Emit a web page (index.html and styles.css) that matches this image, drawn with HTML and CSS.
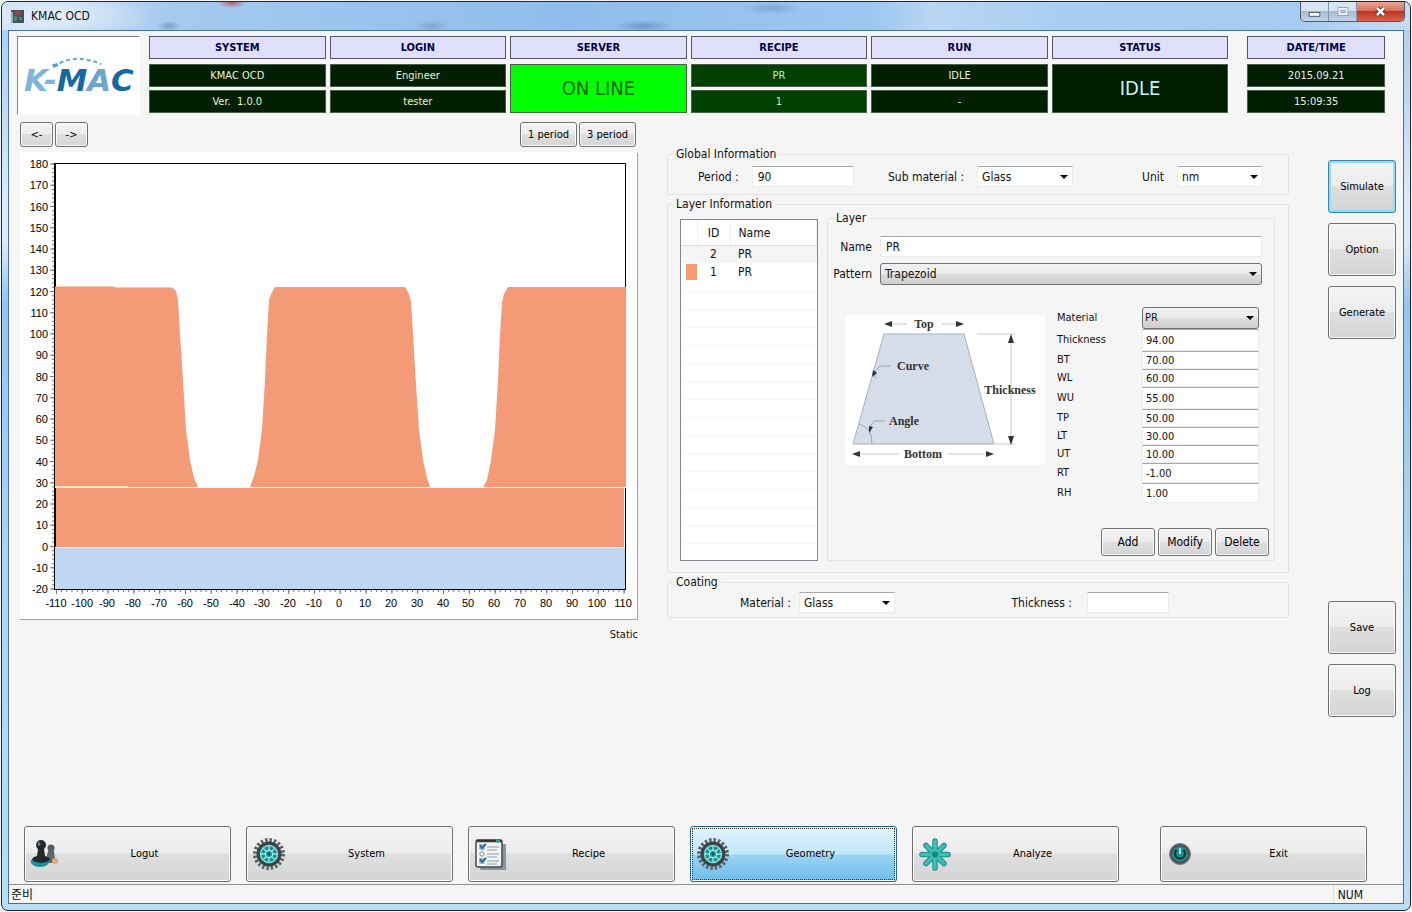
FILE: index.html
```html
<!DOCTYPE html>
<html lang="en">
<head>
<meta charset="utf-8">
<title>KMAC OCD</title>
<link rel="stylesheet" href="styles.css">
</head>
<body>
<svg class="defs" aria-hidden="true">
  <defs>
    <symbol id="gear" viewBox="0 0 34 34">
      <circle cx="17" cy="17" r="14" fill="none" stroke="#5d6468" stroke-width="4" stroke-dasharray="2.500 1.900"/>
      <circle cx="17" cy="17" r="11" fill="#1f5f63" stroke="#3a4347" stroke-width="3"/>
      <circle cx="17" cy="17" r="8.500" fill="#1c8d8f" stroke="#7fdeda" stroke-width="1.500"/>
      <path d="M17 9v16M9 17h16M11.400 11.400l11.200 11.200M22.600 11.400L11.400 22.600" stroke="#8ee6e2" stroke-width="1.400"/>
      <circle cx="17" cy="17" r="3.600" fill="#1c8d8f" stroke="#a8f0ec" stroke-width="1.300"/>
      <circle cx="17" cy="17" r="1.200" fill="#0b4c50"/>
    </symbol>
  </defs>
</svg>
<div class="window">
  <div class="titlebar">
    <svg class="app-icon" viewBox="0 0 13 13" aria-hidden="true"><rect width="13" height="13" fill="#46525a"/><path d="M0 2h2v11H0z" fill="#9fb0b8"/><path d="M4 1h6v4H4z" fill="#8a4a52"/><path d="M3 6h3v5H3zM8 7h3v3H8z" fill="#3d8d80"/></svg>
    <span class="title">KMAC OCD</span>
    <div class="caption">
      <button class="cap" aria-label="Minimize"><svg viewBox="0 0 28 19"><rect x="8.500" y="10.500" width="11" height="4" fill="#fff" stroke="#4c5865"/></svg></button>
      <button class="cap" aria-label="Maximize"><svg viewBox="0 0 26 19"><rect x="8.500" y="5.500" width="10" height="8" fill="#e8f0f8" stroke="#94a5b6"/><rect x="11.500" y="8.500" width="4" height="2" fill="#b9cad9" stroke="#94a5b6"/></svg></button>
      <button class="cap close" aria-label="Close"><svg viewBox="0 0 47 19"><path d="M20 6l7 7M27 6l-7 7" stroke="#5a2a2a" stroke-width="4.500"/><path d="M20 6l7 7M27 6l-7 7" stroke="#fff" stroke-width="2.500"/></svg></button>
    </div>
  </div>

  <main class="client">
    <header class="header">
      <div class="logo">
        <svg viewBox="0 0 122 77" role="img" aria-label="K-MAC">
          <path d="M35 29L40 27.500" stroke="#4f9ccd" stroke-width="3.500"/>
          <path d="M42 26q18-9 42 1" fill="none" stroke="#5fa6d4" stroke-width="2" stroke-dasharray="4 3"/>
          <text x="6" y="54" class="logo-text"><tspan fill="#7db5dc">K-</tspan><tspan fill="#14699f">M</tspan><tspan fill="#6aa6cf">A</tspan><tspan fill="#14699f">C</tspan></text>
        </svg>
      </div>
      <section class="stat"><h2>SYSTEM</h2><p class="cell">KMAC OCD</p><p class="cell">Ver.&nbsp; 1.0.0</p></section>
      <section class="stat"><h2>LOGIN</h2><p class="cell">Engineer</p><p class="cell">tester</p></section>
      <section class="stat"><h2>SERVER</h2><p class="cell big online">ON LINE</p></section>
      <section class="stat green"><h2>RECIPE</h2><p class="cell">PR</p><p class="cell">1</p></section>
      <section class="stat"><h2>RUN</h2><p class="cell">IDLE</p><p class="cell">-</p></section>
      <section class="stat"><h2>STATUS</h2><p class="cell big">IDLE</p></section>
      <section class="stat date"><h2>DATE/TIME</h2><p class="cell">2015.09.21</p><p class="cell">15:09:35</p></section>
    </header>

    <div class="workspace">
      <section class="plot-column">
        <div class="toolbar">
          <button class="btn arrow">&lt;-</button>
          <button class="btn arrow">-&gt;</button>
          <button class="btn period push">1 period</button>
          <button class="btn period">3 period</button>
        </div>
        <svg class="chart" viewBox="20 152 618 468" role="img" aria-label="Layer profile">
          <rect x="20" y="152" width="618" height="468" fill="#fff"/>
          <path d="M637.500 153V619.500H20" fill="none" stroke="#a3a3a3"/>
          <path d="M55 163.500H625.500V589.500H55" fill="none" stroke="#000"/>
          <path d="M55 163V590" stroke="#000" stroke-width="2"/>
          <rect x="55" y="547" width="570" height="42" fill="#bfd7f3"/>
          <rect x="56" y="488" width="568" height="59" fill="#f49a76"/>
          <path d="M55 286.500H114L116 287.500H172L176 291L178 300L180 335L183 380L186 430L190 460L194 478L198 487H250L254 476L258 460L262 430L265 380L267 335L269 300L271 294L275 287H405L409 294L411 302L413 335L416 385L419 430L423 460L427 478L430 487H483L487 480L491 460L495 430L498 380L500 335L502 302L504 294L508 287H626V487H55Z" fill="#f49a76"/>
          <path d="M55 487.500H626M55 547.500H625" stroke="#fff3ec"/>
          <path d="M55 486.500H128" stroke="#fbe3bd"/>
          <path d="M53 163.500V590" stroke="#777" stroke-width="2" stroke-dasharray="1 3.250"/>
          <path d="M52 163.500V590" stroke="#777" stroke-width="4" stroke-dasharray="1 20.250"/>
          <path d="M56 591H625" stroke="#777" stroke-width="2" stroke-dasharray="1 4.160"/>
          <path d="M56 592H625" stroke="#777" stroke-width="4" stroke-dasharray="1 24.800"/>
          <g text-anchor="end">
            <text x="48" y="168">180</text><text x="48" y="189">170</text><text x="48" y="211">160</text><text x="48" y="232">150</text><text x="48" y="253">140</text><text x="48" y="274">130</text><text x="48" y="296">120</text><text x="48" y="317">110</text><text x="48" y="338">100</text><text x="48" y="359">90</text><text x="48" y="381">80</text><text x="48" y="402">70</text><text x="48" y="423">60</text><text x="48" y="444">50</text><text x="48" y="466">40</text><text x="48" y="487">30</text><text x="48" y="508">20</text><text x="48" y="529">10</text><text x="48" y="551">0</text><text x="48" y="572">-10</text><text x="48" y="593">-20</text>
          </g>
          <g text-anchor="middle">
            <text x="56" y="607">-110</text><text x="82" y="607">-100</text><text x="107" y="607">-90</text><text x="133" y="607">-80</text><text x="159" y="607">-70</text><text x="185" y="607">-60</text><text x="211" y="607">-50</text><text x="237" y="607">-40</text><text x="262" y="607">-30</text><text x="288" y="607">-20</text><text x="314" y="607">-10</text><text x="339" y="607">0</text><text x="365" y="607">10</text><text x="391" y="607">20</text><text x="417" y="607">30</text><text x="443" y="607">40</text><text x="468" y="607">50</text><text x="494" y="607">60</text><text x="520" y="607">70</text><text x="546" y="607">80</text><text x="572" y="607">90</text><text x="597" y="607">100</text><text x="623" y="607">110</text>
          </g>
        </svg>
        <p class="static">Static</p>
      </section>

      <form class="forms">
        <fieldset>
          <legend>Global Information</legend>
          <div class="global">
            <div class="pair"><label for="period">Period :</label><input id="period" class="w-period" type="text" value="90"></div>
            <div class="pair"><label for="sub">Sub material :</label><select id="sub" class="w-sub"><option>Glass</option></select></div>
            <div class="pair"><label for="unit">Unit</label><select id="unit" class="w-unit"><option>nm</option></select></div>
          </div>
        </fieldset>

        <fieldset class="spaced">
          <legend>Layer Information</legend>
          <div class="layers">
            <div class="list">
              <table>
                <thead><tr><th class="c-color"></th><th class="c-id">ID</th><th>Name</th></tr></thead>
                <tbody>
                  <tr class="alt"><td></td><td class="c-id">2</td><td>PR</td></tr>
                  <tr><td><span class="swatch"></span></td><td class="c-id">1</td><td>PR</td></tr>
                </tbody>
              </table>
            </div>
            <fieldset>
              <legend>Layer</legend>
              <div class="layer">
                <div class="wide-row"><label for="name">Name</label><input id="name" type="text" value="PR"></div>
                <div class="wide-row"><label for="pattern">Pattern</label><select id="pattern" class="raised"><option>Trapezoid</option></select></div>
                <div class="details">
                  <svg class="shape" viewBox="0 0 200 150" role="img" aria-label="Trapezoid dimensions">
                    <rect width="200" height="150" rx="2" fill="#fff"/>
                    <path d="M39 19H119L149 129H8Z" fill="#d5dde8" stroke="#a9b1bd"/>
                    <path d="M47 9H62M96 9H112M15 139H54M102 139H142M166 26V122M132 19H170M149 129H170" stroke="#c9c9c9" fill="none"/>
                    <path d="M39 9l8-3v6zM119 9l-8-3v6zM7 139l8-3v6zM149 139l-8-3v6zM166 19l-3 9h6zM166 130l-3-9h6z" fill="#333"/>
                    <path d="M46 51H36Q29 54 30 63M40 106H30Q25 108 25 117M14 109Q27 112 27 129" fill="none" stroke="#98a5ba"/>
                    <path d="M27 62l1-7l4 3zM24 118l0-7l4 1z" fill="#22344c"/>
                    <g class="shape-text"><text x="79" y="13">Top</text><text x="68" y="55">Curve</text><text x="59" y="110">Angle</text><text x="165" y="79">Thickness</text><text x="78" y="143">Bottom</text></g>
                  </svg>
                  <div class="params">
                    <label for="mat">Material</label><select id="mat" class="raised"><option>PR</option></select>
                    <label for="th">Thickness</label><input id="th" type="text" value="94.00">
                    <label for="bt">BT</label><input id="bt" type="text" value="70.00">
                    <label for="wl">WL</label><input id="wl" type="text" value="60.00">
                    <label for="wu">WU</label><input id="wu" type="text" value="55.00">
                    <label for="tp">TP</label><input id="tp" type="text" value="50.00">
                    <label for="lt">LT</label><input id="lt" type="text" value="30.00">
                    <label for="ut">UT</label><input id="ut" type="text" value="10.00">
                    <label for="rt">RT</label><input id="rt" type="text" value="-1.00">
                    <label for="rh">RH</label><input id="rh" type="text" value="1.00">
                  </div>
                </div>
                <div class="actions">
                  <button type="button" class="btn">Add</button>
                  <button type="button" class="btn">Modify</button>
                  <button type="button" class="btn">Delete</button>
                </div>
              </div>
            </fieldset>
          </div>
        </fieldset>

        <fieldset class="spaced">
          <legend>Coating</legend>
          <div class="coating">
            <div class="pair"><label for="cmat">Material :</label><select id="cmat" class="w-sub"><option>Glass</option></select></div>
            <div class="pair thick"><label for="cth">Thickness :</label><input id="cth" class="w-thick" type="text"></div>
          </div>
        </fieldset>
      </form>

      <aside class="side">
        <button class="btn default">Simulate</button>
        <button class="btn">Option</button>
        <button class="btn">Generate</button>
        <button class="btn save">Save</button>
        <button class="btn">Log</button>
      </aside>
    </div>

    <nav class="nav">
      <button class="btn">
        <svg viewBox="4 1 34 34" aria-hidden="true"><circle cx="25" cy="12" r="3.500" fill="#555b60"/><path d="M22 15h6l1 8q3 1 3 4H19z" fill="#60666a"/><ellipse cx="29" cy="25" rx="3" ry="3" fill="#e0a878"/><path d="M5 24q10-3 18 0v3q-3 4-9 4t-9-4z" fill="#12949a"/><circle cx="15" cy="9" r="5" fill="#23282b"/><path d="M12 13h6l1 7q5 1 5 4q-4 3-9 3t-9-3q0-3 5-4z" fill="#23282b"/><ellipse cx="13" cy="8" rx="1.500" ry="2" fill="#737b80"/></svg>
        <span>Logut</span></button>
      <button class="btn"><svg aria-hidden="true"><use href="#gear"/></svg><span>System</span></button>
      <button class="btn">
        <svg viewBox="0 0 34 34" aria-hidden="true"><rect x="6" y="7" width="26" height="26" rx="1" fill="#8f9498"/><rect x="2" y="3" width="26" height="27" rx="2" fill="#f2f5f6" stroke="#41474b" stroke-width="1.500"/><path d="M3 4h25" stroke="#333" stroke-width="2.500"/><path d="M22 4h4" stroke="#1fa58a" stroke-width="3"/><g fill="#fff" stroke="#6c8ea4"><rect x="6" y="8" width="4" height="4"/><circle cx="8" cy="17" r="2.200"/><rect x="6" y="22" width="4" height="4"/></g><path d="M6 8l2 3l4-4M6 22l2 3l4-4" fill="none" stroke="#246b9c" stroke-width="2"/><path d="M13 10h12M13 13h10M13 17h12M13 20h10M13 24h12M13 27h10" stroke="#8e989e"/></svg>
        <span>Recipe</span></button>
      <button class="btn current"><svg aria-hidden="true"><use href="#gear"/></svg><span>Geometry</span></button>
      <button class="btn">
        <svg viewBox="0 0 34 34" aria-hidden="true"><path d="M17 4V31M4 17.500H30M8 8.500L26 26.500M26 8.500L8 26.500" stroke="#188e8b" stroke-width="5.500" stroke-linecap="round"/><path d="M17 4V31M4 17.500H30M8 8.500L26 26.500M26 8.500L8 26.500" stroke="#3fbfb4" stroke-width="3.500" stroke-linecap="round"/><circle cx="17" cy="17.500" r="3" fill="#168582"/></svg>
        <span>Analyze</span></button>
      <button class="btn exit">
        <svg viewBox="0 0 34 34" aria-hidden="true"><circle cx="17" cy="17" r="10.500" fill="#4e5559" stroke="#777d80"/><circle cx="17" cy="17" r="7.500" fill="#1d8f8d"/><path d="M13.500 13a5 5 0 1 0 7 0" fill="none" stroke="#072f33" stroke-width="2"/><path d="M17 11v6" stroke="#8bf0e4" stroke-width="2"/></svg>
        <span>Exit</span></button>
    </nav>
    <footer class="statusbar"><span>준비</span><span class="num">NUM</span></footer>
  </main>
</div>
</body>
</html>
```
FILE: styles.css
```css
* { box-sizing: border-box; }
body {
  margin: 0;
  font: 11px/14px "DejaVu Sans Condensed", "Noto Sans", "Noto Sans CJK KR", sans-serif;
  color: #111;
  background: #f4f4f4;
}
button, input, select { font: inherit; color: inherit; }
h2, p { margin: 0; }
.defs { position: absolute; width: 0; height: 0; }

.window {
  display: flex;
  flex-direction: column;
  min-height: calc(100vh - 2px);
  margin: 1px;
  padding: 0 6px 6px;
  border: 1px solid #1c2b33;
  border-radius: 7px;
  background: linear-gradient(180deg, #a9cdf2 0, #b9d8f6 90px, #dcebf9 200px, #dcebf9 240px, #93c5f0 300px, #a8d4f5 60%, #b9def5 100%);
}
.titlebar {
  display: flex;
  align-items: center;
  gap: 7px;
  height: 28px;
  margin: 0 -6px;
  padding-left: 9px;
  border-radius: 6px 6px 0 0;
  background:
    radial-gradient(12px 5px at 167px 24px, #7f9cba, transparent),
    radial-gradient(14px 5px at 230px 1px, #b4616d, transparent),
    radial-gradient(18px 6px at 430px 24px, #84a6c9, transparent),
    radial-gradient(30px 6px at 642px 24px, #6e99c6, transparent),
    radial-gradient(30px 6px at 770px 6px, #7da6d2, transparent),
    radial-gradient(100px 26px at 55px 14px, #e4effa, transparent),
    linear-gradient(90deg, #cfe2f5, #a5caef 12%, #8fbdeb 40%, #9ec7f0 62%, #b9d6f4 66%, #a9cef2 75%, #a6ccf1 92%, #c5dcf3);
}
.app-icon { width: 13px; height: 13px; }
.title { flex: 1; font-size: 12px; }
.caption {
  display: flex;
  align-self: flex-start;
  margin-right: 5px;
  border: 1px solid #4b5a69;
  border-top: 0;
  border-radius: 0 0 5px 5px;
  overflow: hidden;
}
.cap {
  width: 28px;
  height: 19px;
  padding: 0;
  border: 0;
  border-right: 1px solid #8296aa;
  background: linear-gradient(#d6e4f1 45%, #a6bace 50%, #c3d5e6);
}
.cap svg { display: block; width: 100%; height: 19px; }
.cap.close { width: 47px; border: 0; background: linear-gradient(#eaa697, #d9705c 45%, #bf3522 50%, #d9604a); }

.client {
  flex: 1;
  display: flex;
  flex-direction: column;
  border: 1px solid #4a7299;
  background: #f5f5f5;
}

.header {
  display: grid;
  grid-template-columns: 124px repeat(6, 177fr) 153fr;
  column-gap: 4px;
  padding: 5px 22px 7px 8px;
}
.logo {
  height: 79px;
  margin-right: 1px;
  border: 1px solid #fff;
  border-top-color: #777;
  border-left-color: #888;
  background: #fff;
}
.logo svg { display: block; width: 100%; height: 77px; }
.logo-text { font: italic bold 31px "DejaVu Sans", sans-serif; }
.stat { display: flex; flex-direction: column; gap: 3px; margin-left: 4px; margin-right: -4px; text-align: center; }
.stat h2 {
  margin-bottom: 2px;
  font-size: 11px;
  line-height: 21px;
  border: 1px solid #55556a;
  background: #e0e0fd;
  color: #00004e;
}
.cell {
  line-height: 21px;
  border: 1px solid #48604a;
  background: #001e00;
  color: #e9f8c8;
}
.green .cell { background: #004000; color: #b4f5b4; }
.cell.big { font-size: 20px; line-height: 47px; color: #c4f6ee; }
.cell.online { background: #0f0; color: #006a00; }
.date { margin-left: 19px; }
.date .cell { color: #e6f0e6; }

.btn {
  padding: 0;
  border: 1px solid #707070;
  border-radius: 3px;
  box-shadow: inset 0 0 0 1px #fafafa;
  background: linear-gradient(#f4f4f4, #ececec 48%, #dfdfdf 50%, #d4d4d4);
  color: #000;
}

.workspace {
  display: grid;
  grid-template-columns: 618fr 690fr 68px;
  padding: 0 7px 0 11px;
}
.plot-column { min-width: 0; }
.toolbar { display: flex; gap: 2px; margin-bottom: 5px; padding-right: 2px; }
.toolbar .btn { height: 25px; }
.arrow { width: 33px; }
.period { width: 57px; }
.push { margin-left: auto; }
.chart { display: block; width: 100%; }
.chart text { font: 11px "Liberation Sans", sans-serif; }
.static { margin-top: 8px; text-align: right; }

.forms { margin: 25px 39px 0 29px; font-size: 12px; }
fieldset {
  min-width: 0;
  margin: 0;
  padding: 0;
  border: 1px solid #e3e3e3;
  border-radius: 2px;
}
.spaced { margin-top: 2px; }
legend { margin-left: 5px; padding: 0 3px; line-height: 14px; }
input, select {
  width: 100%;
  min-width: 0;
  height: 21px;
  margin: 0;
  padding: 0 5px;
  border: 1px solid #ececec;
  border-top-color: #a8a8a8;
  border-radius: 0;
  background-color: #fff;
}
select {
  appearance: none;
  padding: 0 4px;
  background-image: url("data:image/svg+xml,%3Csvg xmlns='http://www.w3.org/2000/svg' width='8' height='4'%3E%3Cpath d='M0 0h8L4 4z'/%3E%3C/svg%3E");
  background-repeat: no-repeat;
  background-position: right 4px center;
}
select.raised {
  height: 22px;
  border: 1px solid #707070;
  border-radius: 3px;
  background-image: url("data:image/svg+xml,%3Csvg xmlns='http://www.w3.org/2000/svg' width='8' height='4'%3E%3Cpath d='M0 0h8L4 4z'/%3E%3C/svg%3E"), linear-gradient(#f2f2f2, #ebebeb 48%, #dddddd 50%, #cfcfcf);
  background-position: right 4px center, 0 0;
}
.pair { display: flex; align-items: center; gap: 13px; white-space: nowrap; }
.w-period { width: 102px; }
.w-sub { width: 96px; }
.w-unit { width: 86px; }
.w-thick { width: 82px; }

.global {
  display: grid;
  grid-template-columns: 190fr 254fr 146fr;
  padding: 5px 0 7px 30px;
}
.layers {
  display: grid;
  grid-template-columns: 138fr 448fr;
  column-gap: 9px;
  padding: 0 13px 11px 12px;
}
.list {
  margin-top: 8px;
  border: 1px solid #828790;
  background: repeating-linear-gradient(#fff 0 17px, #f8f8f8 17px 18px);
}
.list table { width: 100%; border-collapse: collapse; table-layout: fixed; }
.list th { height: 25px; padding: 2px 0 0 8px; border-right: 1px solid #f0f0f0; border-bottom: 1px solid #dcdcdc; background: #fff; font-weight: normal; text-align: left; }
.list td { height: 18px; padding: 0 0 0 8px; background: #fff; }
.list .alt td { background: #f5f5f5; }
.list th.c-color { width: 16px; }
.list .c-id { width: 33px; padding-left: 0; text-align: center; }
.list td:first-child { padding: 0 0 0 5px; }
.swatch { display: block; width: 11px; height: 16px; background: #f59a72; }

.layer { padding: 11px 12px 4px 4px; }
.wide-row { display: flex; align-items: center; gap: 8px; margin-bottom: 6px; }
.wide-row label { flex: 0 0 40px; text-align: right; }
.wide-row label + * { flex: 1; }
.details {
  display: grid;
  grid-template-columns: 200fr 202fr;
  column-gap: 12px;
  margin: 22px 3px 0 13px;
  font-size: 11px;
}
.shape { width: 100%; margin-top: 8px; }
.shape-text { font: bold 12px "Liberation Serif", serif; fill: #333; text-anchor: middle; }
.params {
  display: grid;
  grid-template-columns: 85fr 117fr;
  grid-template-rows: 22px 22px 18px 18px 22px 18px 18px 18px 20px 20px;
  align-items: center;
}
.params input { height: 100%; padding: 0 3px; }
.params select { padding: 0 2px; }
.actions { display: flex; justify-content: flex-end; gap: 3px; margin: 25px -7px 0 0; }
.actions .btn { width: 54px; height: 28px; }

.coating {
  display: grid;
  grid-template-columns: 272fr 277fr;
  padding: 3px 0 4px 72px;
}
.coating .pair { gap: 8px; }
.coating .thick { gap: 15px; }

.side { display: flex; flex-direction: column; gap: 10px; padding-top: 38px; }
.side .btn { height: 53px; }
.side .default { border-color: #3c7fb1; box-shadow: inset 0 0 0 2px #8ee0fa; }
.side .save { margin-top: 252px; }

.nav {
  display: grid;
  grid-template-columns: repeat(5, 207fr) 233fr;
  column-gap: 15px;
  margin-top: auto;
  padding: 8px 36px 2px 15px;
}
.nav .btn { display: flex; align-items: center; height: 56px; padding: 0 5px; text-align: center; }
.nav svg { flex: none; width: 34px; height: 34px; }
.nav span { flex: 1; }
.nav .exit { margin-left: 26px; padding: 0 6px 0 2px; }
.nav .current {
  border-color: #2c628b;
  outline: 1px dotted #333;
  outline-offset: -3px;
  background: linear-gradient(#e3f4fd, #c3e6fb 50%, #99d4f5 52%, #6dbde9);
}

.statusbar {
  display: flex;
  justify-content: space-between;
  height: 19px;
  padding: 0 40px 0 2px;
  border-top: 1px solid #8f8f8f;
  font-size: 12px;
  line-height: 20px;
}
.num { padding-left: 4px; border-left: 1px solid #ddd; }
```
